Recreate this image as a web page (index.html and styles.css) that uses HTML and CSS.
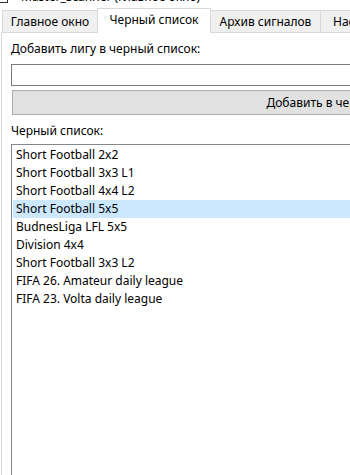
FILE: index.html
```html
<!DOCTYPE html>
<html lang="ru">
<head>
    <meta charset="UTF-8">
    <title>Master_Scanner</title>
    <link rel="stylesheet" href="styles.css">
</head>
<body>

    <!-- Caption row (cut off by the screenshot) -->
    <div class="caption">
        <span class="check"></span>
        <span class="caption-text">Master_Scanner (Главное окно)</span>
    </div>

    <!-- Tabs -->
    <div class="tabs">
        <div class="tab tab-main">Главное окно</div>
        <div class="tab tab-black active">Черный список</div>
        <div class="tab tab-archive">Архив сигналов</div>
        <div class="tab tab-settings">Настройки</div>
    </div>

    <!-- Blacklist page -->
    <div class="panel">
        <div class="label">Добавить лигу в черный список:</div>
        <input type="text" class="league-input">
        <button class="add-btn">Добавить в черный список</button>

        <div class="label label-list">Черный список:</div>
        <ul class="blacklist">
            <li>Short Football 2x2</li>
            <li>Short Football 3x3 L1</li>
            <li>Short Football 4x4 L2</li>
            <li class="selected">Short Football 5x5</li>
            <li>BudnesLiga LFL 5x5</li>
            <li>Division 4x4</li>
            <li>Short Football 3x3 L2</li>
            <li>FIFA 26. Amateur daily league</li>
            <li>FIFA 23. Volta daily league</li>
        </ul>
    </div>

</body>
</html>
```

FILE: styles.css
```css
body {
    margin: 0;
    width: 350px;
    height: 475px;
    overflow: hidden;
    background: #fff;
    font-family: "Noto Sans", "Open Sans", sans-serif;
    font-size: 12px;
    color: #000;
}

/* Caption row */
.caption {
    height: 8px;
    overflow: hidden;
    display: flex;
    align-items: flex-end;
}

.check {
    width: 13px;
    height: 13px;
    box-sizing: border-box;
    border: 1px solid #333;
    background: #fff;
    flex-shrink: 0;
    margin-left: -5px;
    margin-bottom: 5px;
}

.caption-text {
    margin-left: 13px;
    line-height: 16px;
    margin-bottom: 3px;
    white-space: nowrap;
}

/* Tabs */
.tabs {
    display: flex;
    align-items: flex-end;
    height: 24px;
    padding-left: 2px;
    position: relative;
    z-index: 1;
}

.tab {
    height: 22px;
    box-sizing: border-box;
    border: 1px solid #d9d9d9;
    border-bottom: none;
    background: #f0f0f0;
    line-height: 21px;
    text-align: center;
    white-space: nowrap;
    overflow: hidden;
    flex-shrink: 0;
}

.tab + .tab {
    margin-left: -1px;
}

.tab-main { width: 96px; }
.tab-black { width: 114px; }
.tab-archive { width: 111px; }
.tab-settings { width: 80px; text-align: left; padding-left: 12px; }

.tab.active {
    height: 25px;
    margin-bottom: -1px;
    background: #fff;
    line-height: 22px;
    position: relative;
}

/* Page */
.panel {
    margin-left: 1px;
    border-left: 1px solid #dadada;
    border-top: 1px solid #d9d9d9;
    padding: 8px 0 0 9px;
}

.label {
    line-height: 16px;
    white-space: nowrap;
}

.league-input {
    display: block;
    margin: 7px 0 0 0;
    width: 420px;
    height: 22px;
    box-sizing: border-box;
    border: 1px solid #7a7a7a;
    background: #fff;
    padding: 0 3px;
    font: inherit;
}

.add-btn {
    display: block;
    margin: 4px 0 0 1px;
    width: 666px;
    height: 25px;
    box-sizing: border-box;
    border: 1px solid #adadad;
    background: #e1e1e1;
    font: inherit;
    color: #000;
    padding: 0;
}

.label-list {
    margin-top: 8px;
}

.blacklist {
    list-style: none;
    margin: 5px 0 0 0;
    padding: 1px 0 0 1px;
    width: 420px;
    height: 340px;
    box-sizing: border-box;
    border: 1px solid #828790;
    background: #fff;
}

.blacklist li {
    height: 18px;
    line-height: 18px;
    padding-left: 3px;
    white-space: nowrap;
}

.blacklist li.selected {
    background: #cce8ff;
}
```
